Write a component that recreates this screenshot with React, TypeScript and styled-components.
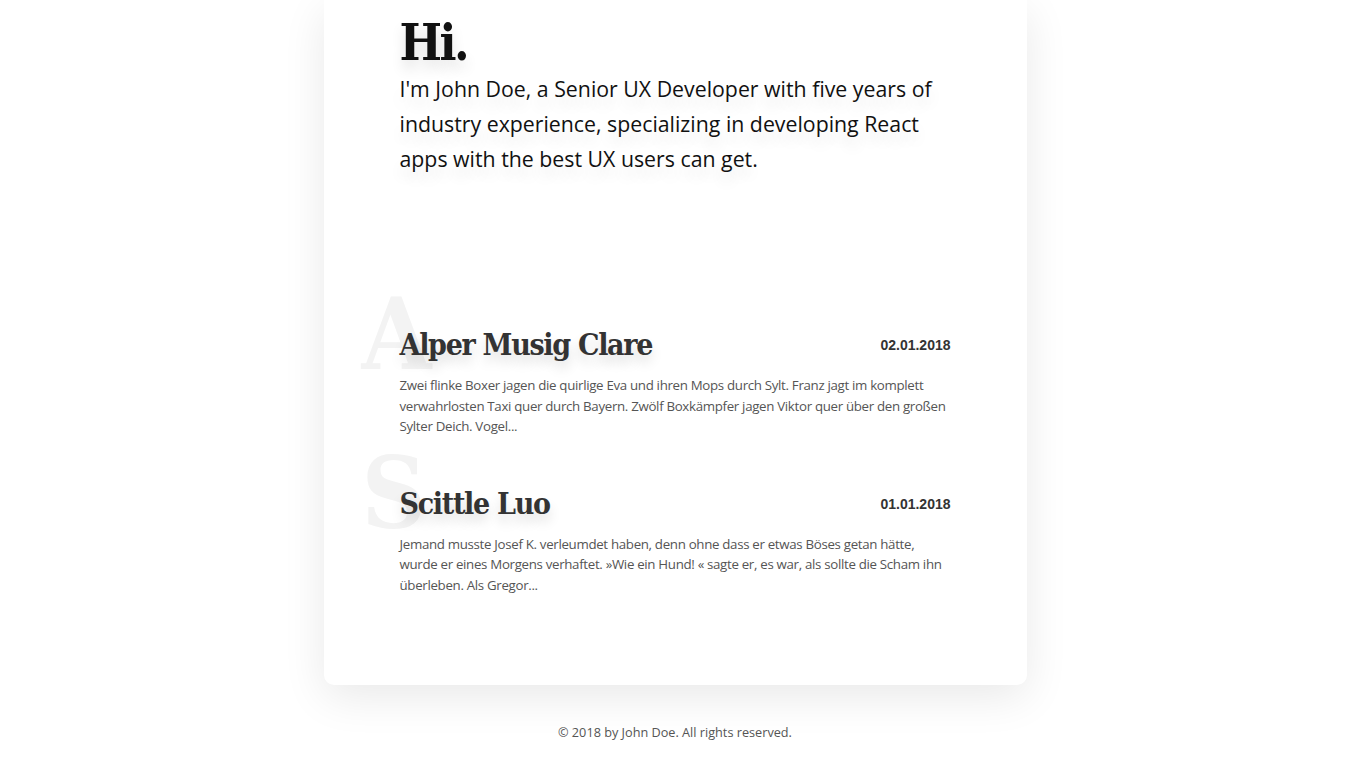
import styled, { createGlobalStyle } from "styled-components";

const GlobalStyle = createGlobalStyle`
    html, body {
        margin: 0;
        padding: 0;
        background: #fff;
        font-family: "Open Sans", "Noto Sans", sans-serif;
        color: #333;
    }
`;

const Page = styled.div`
    display: flex;
    flex-direction: column;
    align-items: center;
`;

const Card = styled.main`
    width: 703px;
    box-sizing: border-box;
    padding: 14px 76px 90px;
    background: #fff;
    border-radius: 0 0 10px 10px;
    box-shadow: 0 12px 44px rgba(0, 0, 0, 0.09);
`;

const Hello = styled.h1`
    margin: 0;
    font-family: "DejaVu Serif", serif;
    font-stretch: condensed;
    font-weight: bold;
    font-size: 50px;
    line-height: 57px;
    letter-spacing: -2.5px;
    color: #111;
    text-shadow: 0 8px 14px rgba(0, 0, 0, 0.12);
`;

const Intro = styled.p`
    margin: 0;
    font-size: 21.3px;
    line-height: 35px;
    color: #111;
    text-shadow: 0 10px 14px rgba(0, 0, 0, 0.1);
`;

const Posts = styled.section`
    margin-top: 149px;
`;

const Post = styled.article`
    position: relative;
    margin-bottom: 47px;

    &:last-child {
        margin-bottom: 0;
    }
`;

const Initial = styled.span`
    position: absolute;
    left: -38px;
    top: -41px;
    font-family: "DejaVu Serif", serif;
    font-stretch: condensed;
    font-weight: bold;
    font-size: 100px;
    line-height: 100px;
    color: #f3f3f3;
    pointer-events: none;
    user-select: none;
`;

const Header = styled.header`
    position: relative;
    display: flex;
    justify-content: space-between;
    align-items: center;
    height: 40px;
`;

const Title = styled.h2`
    margin: 0;
    font-family: "DejaVu Serif", serif;
    font-stretch: condensed;
    font-weight: bold;
    font-size: 30px;
    line-height: 40px;
    letter-spacing: -1.3px;
    color: #333;
    text-shadow: 0 8px 12px rgba(0, 0, 0, 0.13);
`;

const Date = styled.time`
    font-family: "Liberation Sans", Arial, sans-serif;
    font-weight: bold;
    font-size: 14px;
    color: #333;
`;

const Excerpt = styled.p`
    position: relative;
    margin: 10px 0 0;
    font-size: 13.3px;
    line-height: 20.5px;
    letter-spacing: -0.32px;
    color: #555;
`;

const Footer = styled.footer`
    padding: 37px 0 20px;
    font-size: 12.7px;
    line-height: 20px;
    color: #555;
    text-align: center;
`;

const posts = [
    {
        title: "Alper Musig Clare",
        date: "02.01.2018",
        excerpt:
            "Zwei flinke Boxer jagen die quirlige Eva und ihren Mops durch Sylt. Franz jagt im komplett verwahrlosten Taxi quer durch Bayern. Zwölf Boxkämpfer jagen Viktor quer über den großen Sylter Deich. Vogel...",
    },
    {
        title: "Scittle Luo",
        date: "01.01.2018",
        excerpt:
            "Jemand musste Josef K. verleumdet haben, denn ohne dass er etwas Böses getan hätte, wurde er eines Morgens verhaftet. »Wie ein Hund! « sagte er, es war, als sollte die Scham ihn überleben. Als Gregor...",
    },
];

function App() {
    return (
        <>
            <GlobalStyle />
            <Page>
                <Card>
                    <Hello>Hi.</Hello>
                    <Intro>
                        I'm John Doe, a Senior UX Developer with five years of industry
                        experience, specializing in developing React apps with the best UX
                        users can get.
                    </Intro>
                    <Posts>
                        {posts.map((post) => (
                            <Post key={post.title}>
                                <Initial aria-hidden>{post.title[0]}</Initial>
                                <Header>
                                    <Title>{post.title}</Title>
                                    <Date>{post.date}</Date>
                                </Header>
                                <Excerpt>{post.excerpt}</Excerpt>
                            </Post>
                        ))}
                    </Posts>
                </Card>
                <Footer>© 2018 by John Doe. All rights reserved.</Footer>
            </Page>
        </>
    );
}

export default App;
